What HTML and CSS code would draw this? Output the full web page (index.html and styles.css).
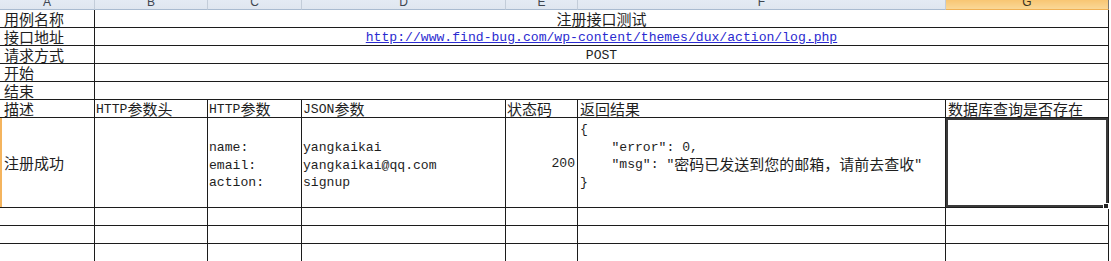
FILE: index.html
```html
<!DOCTYPE html>
<html lang="zh-CN">
<head>
<meta charset="utf-8">
<title>注册接口测试</title>
<link rel="stylesheet" href="styles.css">
</head>
<body>
<div class="sheet">
  <div class="colhead">A</div>
  <div class="colhead">B</div>
  <div class="colhead">C</div>
  <div class="colhead">D</div>
  <div class="colhead">E</div>
  <div class="colhead">F</div>
  <div class="colhead sel">G</div>

  <div class="cell col-a">用例名称</div>
  <div class="cell merged">注册接口测试</div>

  <div class="cell col-a">接口地址</div>
  <div class="cell merged"><span class="en link">http://www.find-bug.com/wp-content/themes/dux/action/log.php</span></div>

  <div class="cell col-a">请求方式</div>
  <div class="cell merged"><span class="en">POST</span></div>

  <div class="cell col-a">开始</div>
  <div class="cell merged"></div>

  <div class="cell col-a">结束</div>
  <div class="cell merged"></div>

  <div class="cell col-a">描述</div>
  <div class="cell"><span class="en">HTTP</span>参数头</div>
  <div class="cell"><span class="en">HTTP</span>参数</div>
  <div class="cell"><span class="en">JSON</span>参数</div>
  <div class="cell">状态码</div>
  <div class="cell col-f">返回结果</div>
  <div class="cell col-g">数据库查询是否存在</div>

  <div class="cell col-a row-sel mid">注册成功</div>
  <div class="cell"></div>
  <div class="cell lines"><span class="en">name:
email:
action:</span></div>
  <div class="cell lines"><span class="en">yangkaikai
yangkaikai@qq.com
signup</span></div>
  <div class="cell mid num"><span class="en">200</span></div>
  <div class="cell col-f result"><span class="en">{
    "error": 0,
    "msg": "</span>密码已发送到您的邮箱，请前去查收<span class="en">"
}</span></div>
  <div class="cell col-g active"><span class="handle"></span></div>

  <div class="cell"></div><div class="cell"></div><div class="cell"></div><div class="cell"></div><div class="cell"></div><div class="cell"></div><div class="cell"></div>
  <div class="cell thick"></div><div class="cell thick"></div><div class="cell thick"></div><div class="cell thick"></div><div class="cell thick"></div><div class="cell thick"></div><div class="cell thick"></div>
  <div class="cell"></div><div class="cell"></div><div class="cell"></div><div class="cell"></div><div class="cell"></div><div class="cell"></div><div class="cell"></div>
</div>
</body>
</html>
```

FILE: styles.css
```css
html, body {
  margin: 0;
  padding: 0;
  background: #ffffff;
}

body {
  width: 1111px;
  height: 261px;
  overflow: hidden;
  font-family: "Noto Sans CJK SC", "Liberation Sans", sans-serif;
  font-size: 15px;
  color: #1e1e1e;
}

.sheet {
  display: grid;
  grid-template-columns: 95px 113px 94px 204px 72px 368px 163px;
  grid-template-rows: 10px repeat(6, 18px) 90px repeat(3, 18px);
}

.colhead {
  box-sizing: border-box;
  border-right: 1px solid #c3cdd9;
  border-bottom: 1px solid #a9bbd0;
  background: linear-gradient(#e4ebf4, #dfe6ef);
  font-family: "Liberation Sans", sans-serif;
  font-size: 12px;
  line-height: 4px;
  color: #3e4650;
  text-align: center;
  overflow: hidden;
}

.colhead.sel {
  background: linear-gradient(#f8c673, #fad897);
  border-bottom-color: #f0b155;
  border-right-color: #777777;
  color: #3a3020;
}

.cell {
  box-sizing: border-box;
  border-right: 1px solid #1c1c1c;
  border-bottom: 1px solid #1c1c1c;
  padding: 0 1px;
  line-height: 17px;
  white-space: pre;
  overflow: hidden;
}

/* the line between rows 9 and 10 reads a little heavier */
.cell.thick {
  border-top: 1px solid #1c1c1c;
  margin-top: -1px;
}

.col-a {
  padding-left: 4px;
}

.col-f,
.col-g {
  padding-left: 2px;
}

.merged {
  grid-column: 2 / -1;
  text-align: center;
}

.en {
  font-family: "Liberation Mono", monospace;
  font-size: 13.1px;
  line-height: 12px;
  vertical-align: 2px;
}

.link {
  color: #2a2ad0;
  text-decoration: underline;
}

.mid {
  display: flex;
  align-items: center;
}

.num {
  justify-content: flex-end;
  padding-right: 2px;
  padding-top: 3px;
}

.lines {
  line-height: 17.5px;
  padding-top: 20px;
}

.result {
  line-height: 17.5px;
  padding-top: 2px;
}

.row-sel {
  box-shadow: inset 2px 0 0 #f4b45e;
}

.active {
  position: relative;
  overflow: visible;
  box-shadow: inset 0 0 0 2px #3a3a3a;
}

.handle {
  position: absolute;
  right: -1px;
  bottom: -2px;
  width: 4px;
  height: 4px;
  background: #222222;
  border: 1px solid #ffffff;
}
```
